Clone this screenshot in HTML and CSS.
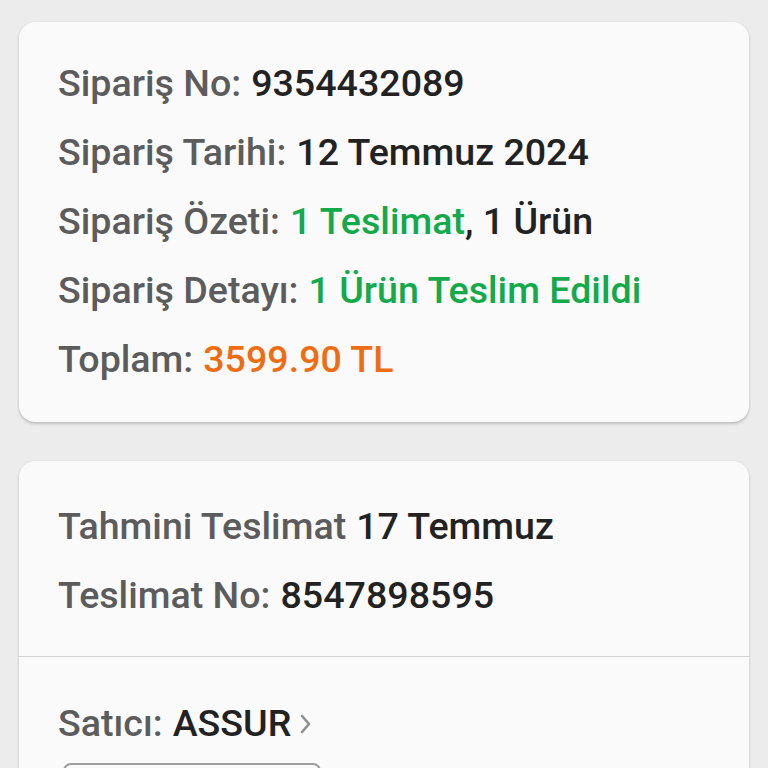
FILE: index.html
```html
<!DOCTYPE html>
<html lang="tr">
<head>
<meta charset="utf-8">
<link rel="stylesheet" href="styles.css">
</head>
<body>
<div class="page">
  <div class="card">
    <div class="section first">
      <div class="row"><span class="label">Sipariş No:</span> <span class="value">9354432089</span></div>
      <div class="row"><span class="label">Sipariş Tarihi:</span> <span class="value">12 Temmuz 2024</span></div>
      <div class="row"><span class="label">Sipariş Özeti:</span> <span class="green">1 Teslimat</span><span class="value">, 1 Ürün</span></div>
      <div class="row"><span class="label">Sipariş Detayı:</span> <span class="green">1 Ürün Teslim Edildi</span></div>
      <div class="row"><span class="label">Toplam:</span> <span class="orange">3599.90 TL</span></div>
    </div>
  </div>
  <div class="card">
    <div class="section second">
      <div class="row"><span class="label">Tahmini Teslimat</span> <span class="value">17 Temmuz</span></div>
      <div class="row"><span class="label">Teslimat No:</span> <span class="value">8547898595</span></div>
    </div>
    <div class="section seller">
      <div class="row"><span class="label">Satıcı:</span> <span class="value">ASSUR</span><svg class="chev" width="14" height="22" viewBox="0 0 14 22"><path d="M3 3 L10 11 L3 19" fill="none" stroke="#8e8e8e" stroke-width="2.6" stroke-linecap="round" stroke-linejoin="round"/></svg></div>
      <div class="button"></div>
    </div>
  </div>
</div>
</body>
</html>
```
FILE: styles.css
```css
html, body {
  margin: 0;
  padding: 0;
  background: #ececec;
  height: 768px;
  overflow: hidden;
}
.page {
  padding: 22px 19px 0 19px;
  display: flex;
  flex-direction: column;
  gap: 39px;
  font-family: Roboto, "Noto Sans", sans-serif;
}
.card {
  background: #fafafa;
  border-radius: 16px;
  box-shadow: 0 2px 3px rgba(0,0,0,0.18), 0 0 2px rgba(0,0,0,0.08);
  overflow: hidden;
}
.section {
  padding: 0 39px;
}
.section.first {
  padding-top: 27px;
  padding-bottom: 28px;
}
.section.second {
  padding-top: 31px;
  padding-bottom: 26px;
  border-bottom: 1.5px solid #d4d4d4;
}
.section.seller {
  padding-top: 32px;
  padding-bottom: 40px;
}
.row {
  font-size: 37.6px;
  line-height: 69px;
  height: 69px;
  white-space: nowrap;
  display: flex;
  align-items: center;
}
.label {
  color: #5c5c5c;
  font-weight: 500;
  margin-right: 10px;
}
.value {
  color: #222222;
  font-weight: 500;
}
.green {
  color: #14a94b;
  font-weight: 500;
}
.orange {
  color: #ee6d12;
  font-weight: 500;
}
.chev {
  margin-left: 8px;
}
.button {
  margin-top: 5px;
  margin-left: 5px;
  width: 254px;
  height: 60px;
  border: 2px solid #9e9e9e;
  border-radius: 8px;
}
```
